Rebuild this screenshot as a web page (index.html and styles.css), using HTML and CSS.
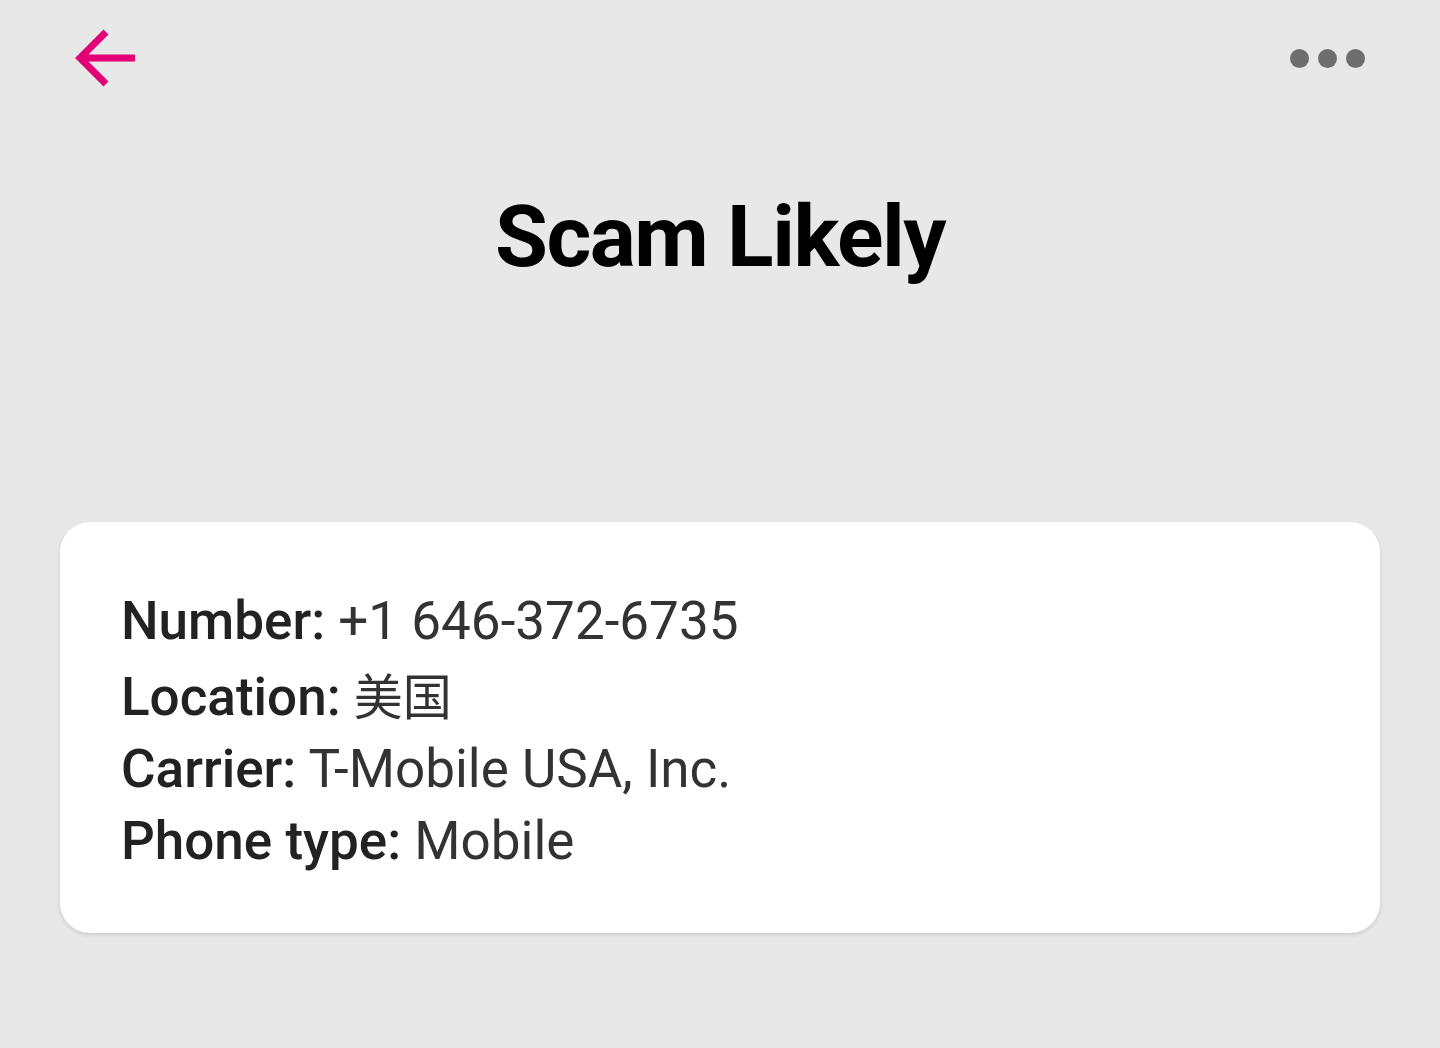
FILE: index.html
```html
<!DOCTYPE html>
<html lang="en">
<head>
<meta charset="utf-8">
<title>Scam Likely</title>
<link rel="stylesheet" href="styles.css">
</head>
<body>
<div class="screen">
  <header class="topbar">
    <button class="icon-btn back" aria-label="Back">
      <svg width="64" height="64" viewBox="0 0 64 64" fill="none">
        <path d="M31 6 L5 32 L31 58 M5 32 H60" stroke="#E20074" stroke-width="7" stroke-linecap="butt" stroke-linejoin="miter"/>
      </svg>
    </button>
    <button class="icon-btn more" aria-label="More options">
      <span class="dot"></span><span class="dot"></span><span class="dot"></span>
    </button>
  </header>
  <h1 class="title">Scam Likely</h1>
  <section class="card">
    <p class="row"><span class="label">Number:</span> <span class="value">+1 646-372-6735</span></p>
    <p class="row"><span class="label">Location:</span> <span class="value cjk">美国</span></p>
    <p class="row"><span class="label">Carrier:</span> <span class="value">T-Mobile USA, Inc.</span></p>
    <p class="row"><span class="label">Phone type:</span> <span class="value">Mobile</span></p>
  </section>
</div>
</body>
</html>
```

FILE: styles.css
```css
* { box-sizing: border-box; }
html, body {
  margin: 0;
  padding: 0;
  background: #e8e8e8;
  font-family: Roboto, "Noto Sans CJK SC", sans-serif;
}
.screen {
  width: 1440px;
  height: 1048px;
  padding: 0 60px;
}
.topbar {
  display: flex;
  justify-content: space-between;
  align-items: center;
  height: 116px;
  padding: 0 15px 0 15px;
}
.icon-btn {
  background: none;
  border: none;
  padding: 0;
  margin: 0;
  cursor: pointer;
}
.back svg { display: block; overflow: visible; }
.more {
  display: flex;
  gap: 9px;
  align-items: center;
}
.dot {
  width: 19px;
  height: 19px;
  border-radius: 50%;
  background: #6e6e6e;
}
.title {
  margin: 71px 0 0;
  text-align: center;
  font-size: 86px;
  font-weight: 700;
  line-height: 100px;
  color: #000;
  letter-spacing: -1.5px;
}
.card {
  margin-top: 235px;
  background: #fff;
  border-radius: 30px;
  box-shadow: 0 2px 4px rgba(0,0,0,0.12);
  padding: 64px 61px 40px;
  height: 411px;
}
.row {
  margin: 0;
  font-size: 53px;
  line-height: 71px;
  color: #333;
}
.row + .row {
  margin-top: 1px;
}
.label {
  font-weight: 500;
  color: #222;
}
.value {
  font-weight: 400;
  color: #333;
}
.cjk {
  font-family: "Noto Sans CJK SC", sans-serif;
  font-weight: 400;
  font-size: 49px;
}
```
